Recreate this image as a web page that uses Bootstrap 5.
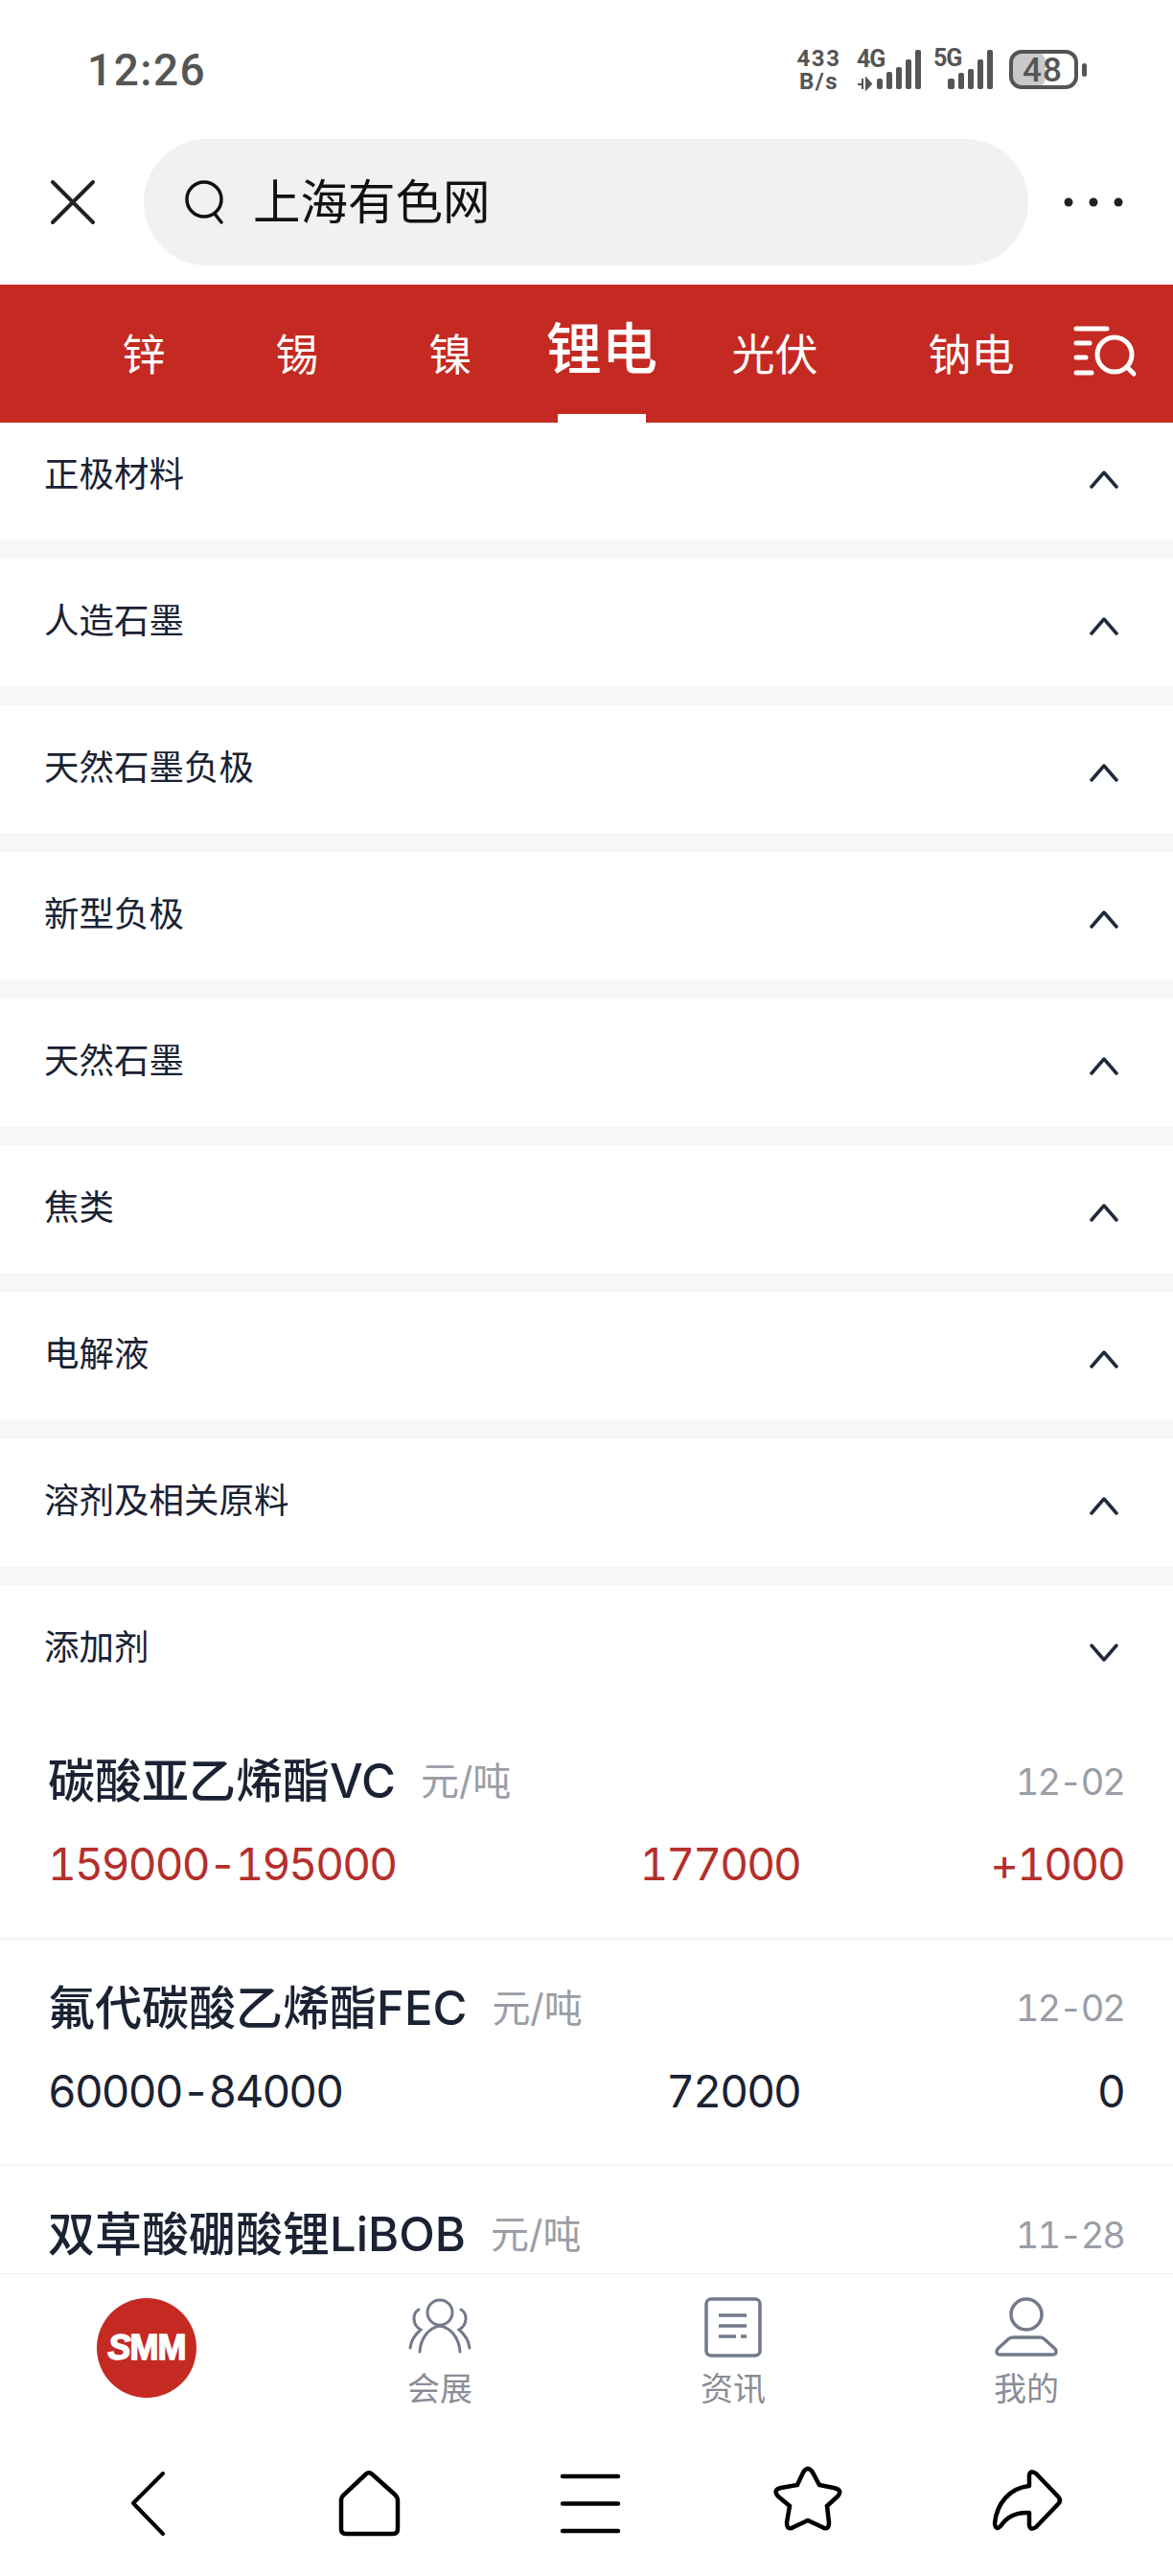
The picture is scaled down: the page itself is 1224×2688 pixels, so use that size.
<!DOCTYPE html>
<html lang="zh-CN">
<head>
  <meta charset="UTF-8" />
  <meta name="viewport" content="width=device-width, initial-scale=1.0"/>
  <title>上海有色网</title>
  <link href="https://cdn.jsdelivr.net/npm/bootstrap@5.3.0/dist/css/bootstrap.min.css" rel="stylesheet" />
  <style>
    body {
      width: 1224px;
      height: 2688px;
      overflow: hidden;
      background-color: #fff;
      font-family: Inter, "Noto Sans CJK SC", sans-serif;
      color: #1a2233;
    }

    .page-wrap { height: 2688px; }

    /* status bar */
    .status-bar {
      height: 145px;
      padding: 0 89px 0 91px;
      color: #555;
      font-family: Roboto, sans-serif;
    }
    .clock { font-size: 46px; font-weight: 500; letter-spacing: 1.5px; line-height: 1; }
    .net-speed { font-size: 24px; font-weight: 700; line-height: 24px; letter-spacing: 1.5px; width: 47px; margin-right: 16px; }
    .net-speed span { display: block; }
    .stat-text { font-family: Roboto, sans-serif; font-weight: 700; fill: #555; }
    .bat-text { font-weight: 500; }
    .sig-4g { margin-right: 12px; }
    .sig-5g { margin-right: 16px; }

    /* search row */
    .search-row { height: 152px; padding: 0 52px 0 53px; }
    .close-icon { margin-top: 43px; }
    .more-icon { margin-top: 61px; }
    .search-pill {
      height: 132px;
      margin: 0 37px 0 51px;
      padding-left: 43px;
      background-color: #f1f1f1;
      font-size: 49.5px;
      color: #111;
      gap: 29px;
    }

    /* channel tabs */
    .tab-strip {
      height: 144px;
      padding-left: 70px;
      background-color: #c42a22;
      color: #fff;
    }
    .tab-item { padding: 3px 57.5px 0; font-size: 45px; }
    .tab-item-on { height: 144px; padding: 0 20px 9px; font-size: 58px; font-weight: 500; }
    .tab-bar-mark {
      left: 50%;
      bottom: 0;
      width: 92px;
      height: 9px;
      margin-left: -46px;
    }
    .filter-icon { left: 1118px; top: 338px; }

    /* list */
    .list-area { min-height: 0; }
    .list-inner { margin-top: -11px; }
    .cat-row {
      height: 134px;
      padding: 0 57px 4px 46px;
      font-size: 36.5px;
    }
    .cat-gap { height: 19px; background-color: #f6f7f9; }
    .cat-arrow { margin-top: 10px; }

    .price-item {
      height: 236.5px;
      padding: 42px 51px 0 50px;
      border-bottom: 3px solid #f5f6f8;
    }
    .price-title { height: 58px; }
    .price-name { font-size: 49px; font-weight: 500; }
    .price-unit { font-size: 40px; color: #9a9ea6; margin-left: 26px; }
    .price-date { font-size: 38px; letter-spacing: -2px; color: #9a9ea6; font-variant-numeric: tabular-nums; }
    .price-vals {
      display: grid;
      grid-template-columns: 1fr 200px 338px;
      height: 58px;
      margin-top: 28px;
      font-size: 46px;
      line-height: 58px;
      letter-spacing: -1.9px;
      font-variant-numeric: tabular-nums;
    }
    .price-up { color: #b52f2c; }

    /* bottom tabs */
    .foot-tabs {
      height: 168px;
      padding-top: 23px;
      border-top: 1px solid #f1f1f3;
      color: #8a8d96;
      font-size: 34px;
    }
    .foot-cell { width: 306px; }
    .foot-icon { height: 64px; }
    .foot-label { line-height: 46px; margin-top: 10px; }
    .logo-disc {
      width: 104px;
      height: 104px;
      margin-top: 2px;
      background-color: #c42a22;
      color: #fff;
      font-family: "Liberation Sans", sans-serif;
      font-weight: 700;
      font-size: 36px;
      letter-spacing: -1px;
      -webkit-text-stroke: 1.5px #fff;
    }
    .logo-s { font-style: italic; }

    /* browser bar */
    .nav-strip { height: 148px; padding: 30px 0 0 40px; }
    .nav-cell { width: 230px; }
  </style>
</head>
<body>
<div class="page-wrap d-flex flex-column">

  <div class="status-bar d-flex align-items-center justify-content-between flex-shrink-0">
    <div class="clock">12:26</div>
    <div class="d-flex align-items-center">
      <div class="net-speed text-center"><span>433</span><span>B/s</span></div>
      <svg class="sig-4g" width="68" height="54" viewBox="0 -6 68 54">
        <text class="stat-text" x="0" y="18" font-size="25" letter-spacing="-1">4G</text>
        <path d="M1 36h5M6 30v11M10 30v11l5-5.500z" fill="#555" stroke="#555" stroke-width="2"/>
        <g fill="#555">
          <rect x="21" y="30" width="6" height="11" rx="2"/>
          <rect x="31" y="23" width="6" height="18" rx="2"/>
          <rect x="41" y="18" width="6" height="23" rx="2"/>
          <rect x="51" y="10" width="6" height="31" rx="2"/>
          <rect x="61" y="0" width="6" height="41" rx="2"/>
        </g>
      </svg>
      <svg class="sig-5g" width="63" height="54" viewBox="0 -6 63 54">
        <text class="stat-text" x="0" y="17" font-size="25" letter-spacing="-1">5G</text>
        <g fill="#555">
          <rect x="15" y="30" width="7" height="11" rx="2"/>
          <rect x="26" y="24" width="6" height="17" rx="2"/>
          <rect x="36" y="20" width="6" height="21" rx="2"/>
          <rect x="46" y="10" width="6" height="31" rx="2"/>
          <rect x="56" y="0" width="6" height="41" rx="2"/>
        </g>
      </svg>
      <svg width="82" height="54" viewBox="0 -6 82 54">
        <rect x="2" y="2" width="36" height="37" rx="10" fill="#c9c9c9"/>
        <rect x="2" y="2" width="68" height="37" rx="11" fill="none" stroke="#555" stroke-width="4"/>
        <rect x="76" y="14" width="5" height="14" rx="2.500" fill="#555"/>
        <text class="stat-text bat-text" x="14" y="33" font-size="35" letter-spacing="1">48</text>
      </svg>
    </div>
  </div>

  <div class="search-row d-flex align-items-start flex-shrink-0">
    <svg class="close-icon" width="46" height="46" viewBox="0 0 46 46">
      <path d="M2 2 44 44M44 2 2 44" stroke="#222" stroke-width="4" stroke-linecap="round" fill="none"/>
    </svg>
    <div class="search-pill rounded-pill d-flex align-items-center flex-grow-1">
      <svg width="42" height="46" viewBox="0 0 42 46">
        <circle cx="20" cy="20" r="18" fill="none" stroke="#111" stroke-width="3.500"/>
        <path d="M31 35 38 44" stroke="#111" stroke-width="3.500" stroke-linecap="round"/>
      </svg>
      <span>上海有色网</span>
    </div>
    <svg class="more-icon" width="62" height="10" viewBox="0 0 62 10">
      <circle cx="5" cy="5" r="4.500" fill="#222"/><circle cx="31" cy="5" r="4.500" fill="#222"/><circle cx="57" cy="5" r="4.500" fill="#222"/>
    </svg>
  </div>

  <div class="tab-strip d-flex align-items-center flex-shrink-0 text-nowrap">
    <div class="tab-item">锌</div>
    <div class="tab-item">锡</div>
    <div class="tab-item">镍</div>
    <div class="tab-item-on position-relative d-flex align-items-center">锂电<span class="tab-bar-mark position-absolute bg-white"></span></div>
    <div class="tab-item">光伏</div>
    <div class="tab-item">钠电</div>
    <svg class="filter-icon position-absolute" width="72" height="62" viewBox="0 0 72 62">
      <g fill="none" stroke="#fff" stroke-width="5" stroke-linecap="round">
        <path d="M5 5H37M5 20H19M5 35H15M5 51H21"/>
        <circle cx="45" cy="32" r="18"/>
        <path d="M58 45 65 52"/>
      </g>
    </svg>
  </div>

  <div class="list-area flex-grow-1 overflow-hidden">
    <div class="list-inner" id="listInner"></div>
  </div>

  <div class="foot-tabs d-flex flex-shrink-0 bg-white">
    <div class="foot-cell d-flex justify-content-center">
      <div class="logo-disc rounded-circle d-flex align-items-center justify-content-center"><span><span class="logo-s">S</span>MM</span></div>
    </div>
    <div class="foot-cell text-center">
      <svg class="foot-icon d-block mx-auto" width="76" height="64" viewBox="0 0 76 64">
        <g fill="none" stroke="#727a8a" stroke-width="3" stroke-linecap="round">
          <circle cx="38" cy="17" r="13"/>
          <path d="M17 58C18 44 26 33 38 31C50 33 58 44 59 58"/>
          <path d="M16 14C9 18 9 30 18 35C12 40 8 46 7 54"/>
          <path d="M60 14C67 18 67 30 58 35C64 40 68 46 69 54"/>
        </g>
      </svg>
      <div class="foot-label">会展</div>
    </div>
    <div class="foot-cell text-center">
      <svg class="foot-icon d-block mx-auto" width="62" height="64" viewBox="0 0 62 64">
        <rect x="3" y="3" width="56" height="59" rx="5" fill="none" stroke="#727a8a" stroke-width="3.500"/>
        <path d="M16 20H45M16 31H45M16 42H34M39 42H45" stroke="#727a8a" stroke-width="3.500" fill="none"/>
      </svg>
      <div class="foot-label">资讯</div>
    </div>
    <div class="foot-cell text-center">
      <svg class="foot-icon d-block mx-auto" width="68" height="64" viewBox="0 0 68 64">
        <circle cx="34" cy="19" r="16" fill="none" stroke="#727a8a" stroke-width="3.500"/>
        <path d="M20 43H48Q51 43 53 45L64 55Q67 61 61 61H7Q1 61 4 55L15 45Q17 43 20 43Z" fill="none" stroke="#727a8a" stroke-width="3.500"/>
      </svg>
      <div class="foot-label">我的</div>
    </div>
  </div>

  <div class="nav-strip d-flex flex-shrink-0 bg-white">
    <div class="nav-cell d-flex justify-content-center">
      <svg width="80" height="80" viewBox="0 0 80 80"><path d="M55 11 24 42 55 74" fill="none" stroke="#000" stroke-width="4" stroke-linecap="round" stroke-linejoin="round"/></svg>
    </div>
    <div class="nav-cell d-flex justify-content-center">
      <svg width="80" height="80" viewBox="0 0 80 80"><path d="M37 11.500Q40 9 43 11.500L67 33Q70 36 70 39V69Q70 74 65 74H16Q11 74 11 69V39Q11 36 14 33Z" fill="none" stroke="#000" stroke-width="4.500"/></svg>
    </div>
    <div class="nav-cell d-flex justify-content-center">
      <svg width="80" height="80" viewBox="0 0 80 80"><path d="M12 14H70M12 42.500H70M12 71H70" stroke="#000" stroke-width="4.500" stroke-linecap="round"/></svg>
    </div>
    <div class="nav-cell d-flex justify-content-center">
      <svg width="80" height="80" viewBox="5 0 80 80"><path d="M38 10Q43 2 48 10L55 23 70 26Q80 28 74 35L63 45 65 62Q65 71 58 67L43 60 28 67Q21 71 21 62L24 45 12 35Q6 28 15 26L32 23Z" fill="none" stroke="#000" stroke-width="4.500"/></svg>
    </div>
    <div class="nav-cell d-flex justify-content-center">
      <svg width="80" height="80" viewBox="5 0 80 80"><path d="M44 24V13Q45 7 51 11L74 35Q78 39 74 43L51 67Q45 71 44 65V52C30 51 20 57 14 66Q9 71 8 63C10 42 24 26 44 24Z" fill="none" stroke="#000" stroke-width="4.500" stroke-linejoin="round"/></svg>
    </div>
  </div>
</div>

<script src="https://cdn.jsdelivr.net/npm/bootstrap@5.3.0/dist/js/bootstrap.bundle.min.js"></script>
<script>
  const cats = ["正极材料", "人造石墨", "天然石墨负极", "新型负极", "天然石墨", "焦类", "电解液", "溶剂及相关原料", "添加剂"];
  const prices = [
    { name: "碳酸亚乙烯酯VC", date: "12-02", range: "159000-195000", mid: "177000", chg: "+1000", up: true },
    { name: "氟代碳酸乙烯酯FEC", date: "12-02", range: "60000-84000", mid: "72000", chg: "0", up: false },
    { name: "双草酸硼酸锂LiBOB", date: "11-28", range: "", mid: "", chg: "", up: false }
  ];

  function arrow(open) {
    const d = open ? "M2 17 15 2 28 17" : "M2 2 15 17 28 2";
    return `<svg class="cat-arrow" width="30" height="19" viewBox="0 0 30 19"><path d="${d}" fill="none" stroke="#1f2a3d" stroke-width="3.500" stroke-linecap="round" stroke-linejoin="round"/></svg>`;
  }

  let html = "";
  cats.forEach((c, i) => {
    const last = i === cats.length - 1;
    html += `<div class="cat-row d-flex align-items-center justify-content-between"><span>${c}</span>${arrow(!last)}</div>`;
    if (!last) html += `<div class="cat-gap"></div>`;
  });
  prices.forEach(p => {
    html += `<div class="price-item">
      <div class="price-title d-flex align-items-center">
        <span class="price-name">${p.name}</span><span class="price-unit">元/吨</span>
        <span class="price-date ms-auto">${p.date}</span>
      </div>
      <div class="price-vals ${p.up ? "price-up" : ""}">
        <span>${p.range}</span><span class="text-end">${p.mid}</span><span class="text-end">${p.chg}</span>
      </div>
    </div>`;
  });
  document.getElementById("listInner").innerHTML = html;
</script>
</body>
</html>
